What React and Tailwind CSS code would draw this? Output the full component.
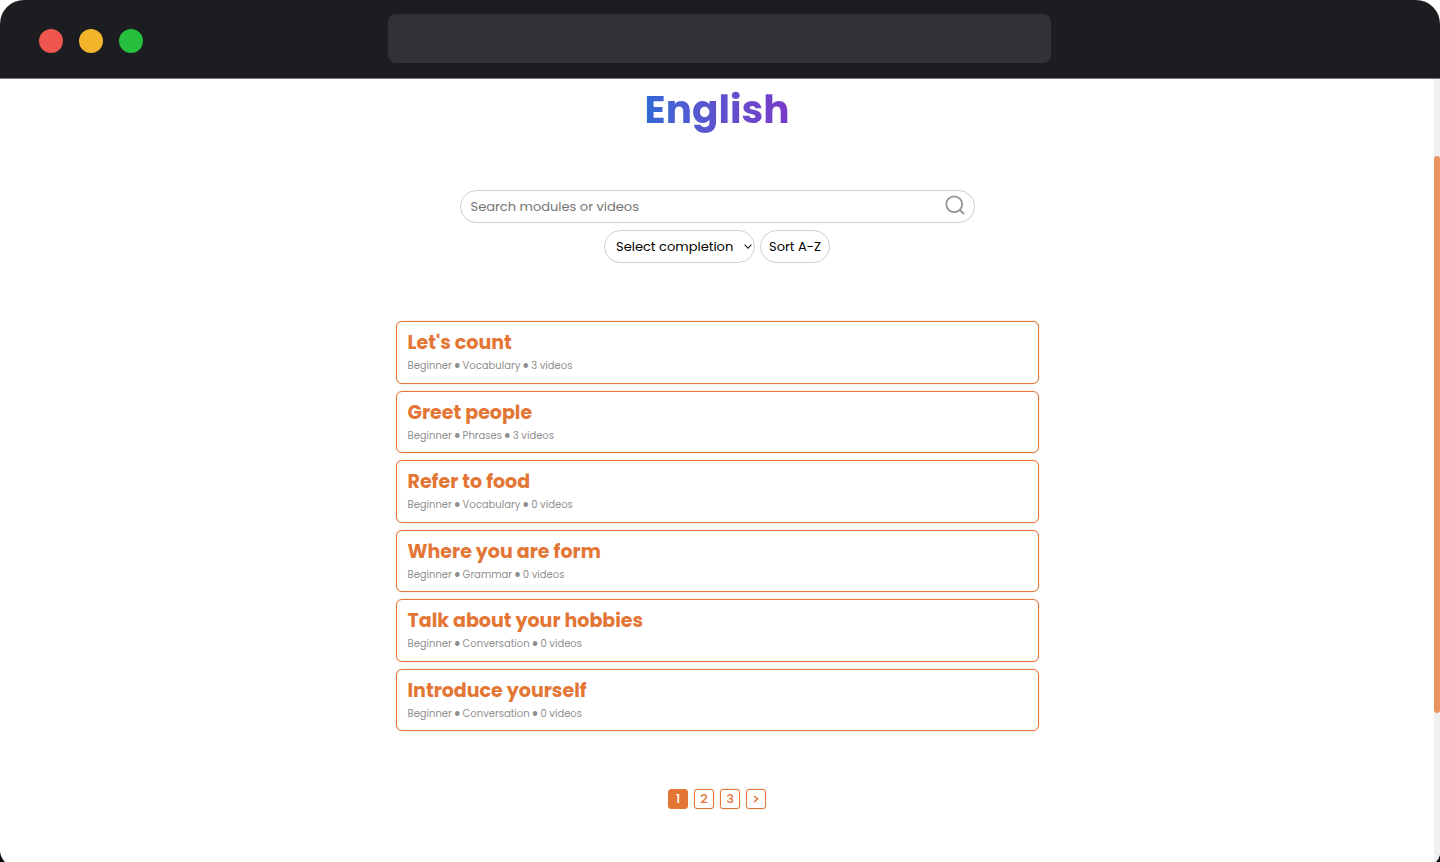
import { useState } from "react";

const modules = [
  { title: "Let's count", topic: "Vocabulary", videos: 3 },
  { title: "Greet people", topic: "Phrases", videos: 3 },
  { title: "Refer to food", topic: "Vocabulary", videos: 0 },
  { title: "Where you are form", topic: "Grammar", videos: 0 },
  { title: "Talk about your hobbies", topic: "Conversation", videos: 0 },
  { title: "Introduce yourself", topic: "Conversation", videos: 0 },
];

function WindowBar() {
  return (
    <header className="grid h-[79px] shrink-0 grid-cols-[1fr_minmax(0,663px)_1fr] rounded-t-3xl border-b border-[#74787c] bg-[#1c1d20] pr-px">
      <div className="flex items-center gap-4 pt-1 pl-[39px]">
        <span className="size-6 rounded-full bg-[#f05650]" />
        <span className="size-6 rounded-full bg-[#f2b42a]" />
        <span className="size-6 rounded-full bg-[#26c03e]" />
      </div>
      <div className="mt-[14px] h-[49px] rounded-lg bg-[#313235]" />
    </header>
  );
}

function SearchBox() {
  return (
    <div className="flex h-[33px] w-full max-w-[515px] items-center rounded-full border border-[#cfcfcf] pr-[9px] pl-[10px]">
      <input
        type="text"
        aria-label="Search modules or videos"
        placeholder="Search modules or videos"
        className="h-full min-w-0 flex-1 bg-transparent text-[13px] leading-6 text-black outline-none placeholder:text-[#757575]"
      />
      <svg viewBox="0 0 20 20" className="mb-1 size-5" fill="none" stroke="#929292" strokeWidth="1.8">
        <circle cx="9.2" cy="9.2" r="7.9" />
        <path d="M14.8 14.8 19 19" />
      </svg>
    </div>
  );
}

function Filters() {
  return (
    <div className="mt-[7px] flex items-center justify-center gap-[5px]">
      <div className="relative">
        <select
          aria-label="Completion"
          className="h-[33px] w-[151px] appearance-none rounded-full border border-[#cfcfcf] bg-white pl-[11px] text-[13px] text-black"
        >
          <option>Select completion</option>
          <option>Completed</option>
          <option>Not completed</option>
        </select>
        <svg
          viewBox="0 0 8 5"
          className="pointer-events-none absolute top-[14px] right-[3px] h-[5px] w-2"
          fill="none"
          stroke="#222"
          strokeWidth="1.1"
        >
          <path d="M.6.7 4 4.1 7.4.7" />
        </svg>
      </div>
      <button type="button" className="h-[33px] w-[70px] rounded-full border border-[#cfcfcf] text-[13px] text-black">
        Sort A-Z
      </button>
    </div>
  );
}

function Dot() {
  return <span className="align-[1px] text-[6px] leading-none">●</span>;
}

function ModuleCard({ title, topic, videos }) {
  return (
    <li className="flex">
      <a href="#module" className="block w-full rounded-md border border-[#e37635] px-[11px] pt-[6px] pb-2 shadow-[0_0_1px_#e37635]">
        <h2 className="text-[19px] leading-[30px] font-bold text-[#e37635]">{title}</h2>
        <p className="text-[10px] leading-[15px] text-[#8f8f8f]">
          Beginner <Dot /> {topic} <Dot /> {videos} videos
        </p>
      </a>
    </li>
  );
}

function Pagination() {
  const [page, setPage] = useState(1);
  return (
    <nav aria-label="Pages" className="mt-[58px] flex gap-[6px] text-[13px] font-medium">
      {[1, 2, 3].map((n) => (
        <button
          key={n}
          type="button"
          onClick={() => setPage(n)}
          className={
            n === page
              ? "flex size-5 items-center justify-center rounded-[3px] border border-[#e37635] bg-[#e37635] text-white"
              : "flex size-5 items-center justify-center rounded-[3px] border border-[#e37635] text-[#e37635] shadow-[0_0_1px_#e37635]"
          }
        >
          {n}
        </button>
      ))}
      <button
        type="button"
        aria-label="Next page"
        className="flex size-5 items-center justify-center rounded-[3px] border border-[#e37635] text-[#e37635] shadow-[0_0_1px_#e37635]"
      >
        <svg viewBox="0 0 6 8" className="h-2 w-[6px]" fill="none" stroke="currentColor" strokeWidth="1.5">
          <path d="M1 1 4.6 4 1 7" />
        </svg>
      </button>
    </nav>
  );
}

export default function App() {
  return (
    <div className="relative flex min-h-screen flex-col overflow-hidden bg-white font-['Poppins','Inter',sans-serif]">
      <WindowBar />
      <div className="flex flex-1">
        <main className="flex min-w-0 flex-1 flex-col items-center px-4 pt-2 pb-8">
          <h1 className="bg-linear-to-r from-[#2f68d4] to-[#7838c8] bg-clip-text text-[39px] leading-[46px] font-bold text-transparent">
            English
          </h1>
          <search className="mt-[57px] w-full">
            <form className="flex flex-col items-center" onSubmit={(e) => e.preventDefault()}>
              <SearchBox />
              <Filters />
            </form>
          </search>
          <ul className="mt-[58px] grid min-h-[410px] w-full max-w-[643px] auto-rows-fr gap-[7px]">
            {modules.map((m) => (
              <ModuleCard key={m.title} {...m} />
            ))}
          </ul>
          <Pagination />
        </main>
        <div aria-hidden="true" className="w-[6px] shrink-0 bg-[#f0f0f0] pt-[77px]">
          <div className="h-[557px] rounded-[3px] bg-[#e9945e]" />
        </div>
      </div>
      <svg viewBox="0 0 6 13" className="absolute bottom-0 left-0 h-[13px] w-[6px]" fill="#08080c">
        <path d="M0 3Q1 9 5 13H0Z" />
      </svg>
      <svg viewBox="0 0 6 13" className="absolute right-0 bottom-0 h-[13px] w-[6px]" fill="#08080c">
        <path d="M6 6Q5 10 2 13H6Z" />
      </svg>
    </div>
  );
}
